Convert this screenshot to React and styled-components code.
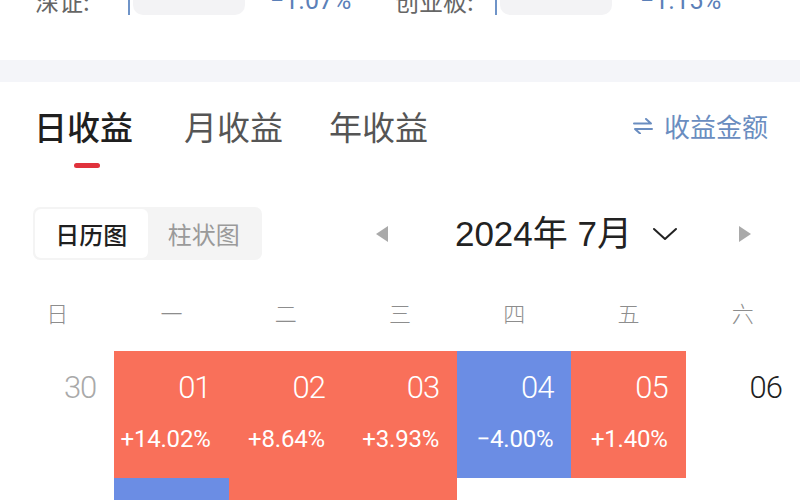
import React from "react";
import styled, { createGlobalStyle } from "styled-components";

const GlobalStyle = createGlobalStyle`
  html, body {
    margin: 0;
    padding: 0;
    background: #ffffff;
    overflow: hidden;
  }
  body {
    font-family: "Noto Sans CJK SC", "Noto Sans", sans-serif;
    color: #222;
  }
`;

const RED = "#f9705a";
const BLUE = "#6b8de4";

const Page = styled.div`
  width: 800px;
  height: 500px;
  overflow: hidden;
  background: #fff;
`;

/* ---- market index strip ---- */
const IndexStrip = styled.div`
  height: 60px;
  display: flex;
  align-items: flex-start;
  padding-left: 35px;
`;

const IndexItem = styled.div`
  display: flex;
  align-items: center;
  height: 30px;
  margin-top: -14px;
  width: ${(p) => p.$w}px;
`;

const IndexName = styled.span`
  font-size: 24px;
  color: #666;
  width: ${(p) => p.$w}px;
  line-height: 30px;
`;

const Track = styled.div`
  width: 112px;
  height: 28px;
  border-radius: 10px;
  background: #f3f3f5;
`;

const Tick = styled.div`
  width: 2px;
  height: 28px;
  margin-right: 3px;
  background: #6f94c8;
`;

const IndexValue = styled.span`
  margin-left: ${(p) => p.$gap}px;
  font-family: "Roboto", "Liberation Sans", sans-serif;
  font-size: 25px;
  color: #5b80b8;
  line-height: 30px;
`;

const Band = styled.div`
  height: 22px;
  background: #f4f5f9;
`;

/* ---- period tabs ---- */
const TabBar = styled.div`
  height: 100px;
  display: flex;
  align-items: flex-start;
  padding: 0 32px 0 34px;
`;

const Tab = styled.div`
  display: flex;
  flex-direction: column;
  align-items: center;
  margin-right: ${(p) => p.$mr}px;
  margin-top: 23px;
`;

const TabLabel = styled.span`
  font-size: 33px;
  line-height: 42px;
  height: 42px;
  color: ${(p) => (p.$active ? "#1f1f1f" : "#555")};
  font-weight: ${(p) => (p.$active ? 500 : 400)};
`;

const TabLine = styled.div`
  margin-top: 16px;
  margin-left: 6px;
  width: 26px;
  height: 5px;
  border-radius: 3px;
  background: ${(p) => (p.$active ? "#e0323c" : "transparent")};
`;

const Switcher = styled.div`
  margin-left: auto;
  margin-top: 27px;
  display: flex;
  align-items: center;
  gap: 10px;
  color: #6a8dc0;
  font-size: 26px;
  line-height: 34px;
`;

/* ---- chart type + month ---- */
const ControlRow = styled.div`
  height: 53px;
  margin-top: 25px;
  display: flex;
  align-items: center;
  padding: 0 48px 0 33px;
`;

const Segmented = styled.div`
  display: flex;
  width: 229px;
  height: 53px;
  padding: 2px;
  box-sizing: border-box;
  border-radius: 7px;
  background: #f4f4f4;
`;

const Segment = styled.div`
  flex: 1;
  display: flex;
  align-items: center;
  justify-content: center;
  border-radius: 6px;
  font-size: 24px;
  background: ${(p) => (p.$active ? "#fff" : "transparent")};
  color: ${(p) => (p.$active ? "#1f1f1f" : "#9a9a9a")};
  font-weight: ${(p) => (p.$active ? 500 : 400)};
`;

const MonthNav = styled.div`
  margin-left: auto;
  display: flex;
  align-items: center;
`;

const MonthLabel = styled.span`
  margin-left: 66px;
  font-family: "Liberation Sans", "Noto Sans CJK SC", sans-serif;
  font-size: 35px;
  color: #222;
  line-height: 40px;
`;

const Chevron = styled.svg`
  margin-left: 20px;
  margin-right: 60px;
`;

/* ---- calendar ---- */
const WeekHeader = styled.div`
  margin-top: 33px;
  height: 38px;
  display: grid;
  grid-template-columns: repeat(7, 1fr);
  margin-bottom: 20px;
`;

const WeekDay = styled.div`
  display: flex;
  align-items: center;
  justify-content: center;
  font-size: 22px;
  font-weight: 300;
  color: #8d8d8d;
`;

const CalRow = styled.div`
  display: grid;
  grid-template-columns: repeat(7, 1fr);
  height: 127px;
`;

const Cell = styled.div`
  display: flex;
  flex-direction: column;
  align-items: flex-end;
  padding: 20px 18px 0 0;
  background: ${(p) => (p.$tone === "up" ? RED : p.$tone === "down" ? BLUE : "#fff")};
  color: ${(p) => (p.$tone ? "#fff" : p.$muted ? "#a9a9a9" : "#1f1f1f")};
  font-family: "Roboto", "Liberation Sans", sans-serif;
`;

const DayNum = styled.span`
  font-size: 31px;
  font-weight: 300;
  line-height: 34px;
  letter-spacing: -1px;
`;

const DayPct = styled.span`
  margin-top: 21px;
  font-size: 24px;
  line-height: 26px;
  letter-spacing: -0.2px;
`;

const weekdays = ["日", "一", "二", "三", "四", "五", "六"];

const rows = [
  [
    { d: "30", muted: true },
    { d: "01", tone: "up", p: "+14.02%" },
    { d: "02", tone: "up", p: "+8.64%" },
    { d: "03", tone: "up", p: "+3.93%" },
    { d: "04", tone: "down", p: "−4.00%" },
    { d: "05", tone: "up", p: "+1.40%" },
    { d: "06" },
  ],
  [
    { d: "07" },
    { d: "08", tone: "down", p: "−2.15%" },
    { d: "09", tone: "up", p: "+5.21%" },
    { d: "10", tone: "up", p: "+2.06%" },
    { d: "11" },
    { d: "12" },
    { d: "13" },
  ],
];

function SwapIcon() {
  return (
    <svg width="22" height="16" viewBox="0 0 22 16" fill="none" stroke="#6a8dc0" strokeWidth="2" strokeLinecap="round" strokeLinejoin="round">
      <path d="M2 5.5h17l-5-4.5" />
      <path d="M20 11H3l5 4.5" />
    </svg>
  );
}

function Triangle({ dir }) {
  return (
    <svg width="14" height="18" viewBox="0 0 14 18">
      {dir === "left" ? (
        <polygon points="13,1 1,9 13,17" fill="#a9a9a9" />
      ) : (
        <polygon points="1,1 13,9 1,17" fill="#a9a9a9" />
      )}
    </svg>
  );
}

export default function App() {
  return (
    <Page>
      <GlobalStyle />
      <IndexStrip>
        <IndexItem $w={360}>
          <IndexName $w={93}>深证:</IndexName>
          <Tick />
          <Track />
          <IndexValue $gap={25}>−1.07%</IndexValue>
        </IndexItem>
        <IndexItem $w={360}>
          <IndexName $w={100}>创业板:</IndexName>
          <Tick />
          <Track />
          <IndexValue $gap={28}>−1.15%</IndexValue>
        </IndexItem>
      </IndexStrip>
      <Band />

      <TabBar>
        <Tab $mr={51}>
          <TabLabel $active>日收益</TabLabel>
          <TabLine $active />
        </Tab>
        <Tab $mr={46}>
          <TabLabel>月收益</TabLabel>
          <TabLine />
        </Tab>
        <Tab $mr={0}>
          <TabLabel>年收益</TabLabel>
          <TabLine />
        </Tab>
        <Switcher>
          <SwapIcon />
          <span>收益金额</span>
        </Switcher>
      </TabBar>

      <ControlRow>
        <Segmented>
          <Segment $active>日历图</Segment>
          <Segment>柱状图</Segment>
        </Segmented>
        <MonthNav>
          <Triangle dir="left" />
          <MonthLabel>2024年 7月</MonthLabel>
          <Chevron width="26" height="14" viewBox="0 0 26 14" fill="none" stroke="#222" strokeWidth="2" strokeLinecap="round" strokeLinejoin="round">
            <polyline points="2,2 13,12 24,2" />
          </Chevron>
          <Triangle dir="right" />
        </MonthNav>
      </ControlRow>

      <WeekHeader>
        {weekdays.map((w) => (
          <WeekDay key={w}>{w}</WeekDay>
        ))}
      </WeekHeader>

      {rows.map((row, i) => (
        <CalRow key={i}>
          {row.map((c) => (
            <Cell key={c.d} $tone={c.tone} $muted={c.muted}>
              <DayNum>{c.d}</DayNum>
              {c.p && <DayPct>{c.p}</DayPct>}
            </Cell>
          ))}
        </CalRow>
      ))}
    </Page>
  );
}
